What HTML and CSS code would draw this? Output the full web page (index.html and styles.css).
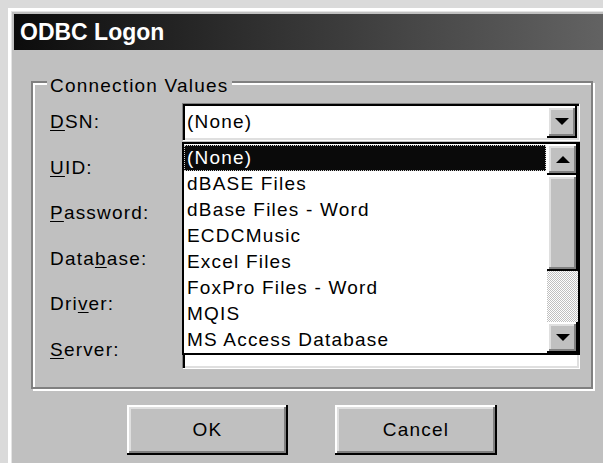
FILE: index.html
```html
<!DOCTYPE html>
<html lang="en">
<head>
<meta charset="utf-8">
<title>ODBC Logon</title>
<link rel="stylesheet" href="styles.css">
</head>
<body>
<div class="window">
  <div class="titlebar">ODBC Logon</div>
  <div class="client">
    <fieldset class="group">
      <legend>Connection Values</legend>
      <div class="form">
        <label class="lbl"><u>D</u>SN:</label>
        <div class="combo">
          <div class="sunken combo-field">
            <span class="combo-text">(None)</span>
            <span class="raised combo-btn">
              <svg width="14" height="8" viewBox="0 0 14 8"><polygon points="0,0 14,0 7,7"/></svg>
            </span>
          </div>
          <div class="droplist">
            <ul class="items">
              <li class="sel">(None)</li>
              <li>dBASE Files</li>
              <li>dBase Files - Word</li>
              <li>ECDCMusic</li>
              <li>Excel Files</li>
              <li>FoxPro Files - Word</li>
              <li>MQIS</li>
              <li>MS Access Database</li>
            </ul>
            <div class="vscroll">
              <span class="raised sb-btn">
                <svg width="14" height="8" viewBox="0 0 14 8"><polygon points="7,0 14,7 0,7"/></svg>
              </span>
              <span class="sb-track">
                <span class="raised sb-thumb"></span>
              </span>
              <span class="raised sb-btn">
                <svg width="14" height="8" viewBox="0 0 14 8"><polygon points="0,0 14,0 7,7"/></svg>
              </span>
            </div>
          </div>
        </div>
        <label class="lbl"><u>U</u>ID:</label>
        <div class="sunken edit"></div>
        <label class="lbl"><u>P</u>assword:</label>
        <div class="sunken edit"></div>
        <label class="lbl">Data<u>b</u>ase:</label>
        <div class="sunken edit"></div>
        <label class="lbl">Dri<u>v</u>er:</label>
        <div class="sunken edit"></div>
        <label class="lbl"><u>S</u>erver:</label>
        <div class="sunken edit"></div>
      </div>
    </fieldset>
    <div class="buttons">
      <button class="raised push" type="button">OK</button>
      <button class="raised push cancel" type="button">Cancel</button>
    </div>
  </div>
</div>
</body>
</html>
```

FILE: styles.css
```css
html, body {
  margin: 0;
  overflow: hidden;
}

body {
  width: 603px;
  height: 463px;
  background: #dadada;
  font-family: "Liberation Sans", Arial, sans-serif;
  font-size: 19px;
  letter-spacing: 1.2px;
  color: #000;
}

/* dialog frame */
.window {
  margin: 8px 0 0 8px;
  width: 640px;
  height: 520px;
  background: #c0c0c0;
  border-top: 3px solid #fff;
  border-left: 3px solid #fff;
  padding: 3px 0 0 3px;
  box-shadow: inset 1px 1px 0 #e4e4e4;
}

.titlebar {
  height: 36px;
  line-height: 36px;
  padding-left: 6px;
  background: linear-gradient(to right, #0c0c0c, #6a6a6a);
  color: #fff;
  font-weight: bold;
  font-size: 23px;
  letter-spacing: 0;
}

.client {
  padding: 17px 0 0 17px;
}

/* etched group box */
.group {
  box-sizing: border-box;
  width: 562px;
  margin: 0;
  padding: 6px 11px 18px 17px;
  border: 2px solid #808080;
  box-shadow: inset 2px 2px 0 #fff, 2px 2px 0 #fff;
  min-inline-size: 0;
}

.group legend {
  margin-left: -3px;
  padding: 8px 3px 0;
  line-height: 22px;
  background: #c0c0c0;
}

.form {
  display: grid;
  grid-template-columns: 132px 398px;
  grid-auto-rows: 38px;
  row-gap: 7.6px;
  align-items: center;
}

.lbl u {
  text-underline-offset: 2px;
}

/* 3D edges */
.sunken {
  box-sizing: border-box;
  height: 38px;
  background: #fff;
  border: 1px solid;
  border-color: #808080 #fff #fff #808080;
  box-shadow: inset 2px 2px 0 #000, inset -2px -2px 0 #dfdfdf;
}

.raised {
  box-sizing: border-box;
  background: #c0c0c0;
  box-shadow: inset -2px -2px 0 #000, inset 2px 2px 0 #fff, inset -4px -4px 0 #808080, inset 4px 4px 0 #dfdfdf;
}

/* combo box */
.combo {
  position: relative;
  height: 38px;
}

.combo-field {
  display: flex;
  align-items: center;
  padding: 2px;
}

.combo-text {
  padding-left: 2px;
}

.combo-btn {
  margin-left: auto;
  width: 30px;
  height: 32px;
  display: flex;
  align-items: center;
  justify-content: center;
}

.combo-btn svg,
.sb-btn svg {
  display: block;
  fill: #000;
}

/* open drop-down list */
.droplist {
  position: absolute;
  left: 0;
  top: calc(100% + 1px);
  box-sizing: border-box;
  width: 100%;
  height: 213px;
  border: 2px solid #000;
  background: #fff;
  display: flex;
  z-index: 2;
}

.items {
  flex: 1;
  list-style: none;
  margin: 0;
  padding: 1px 1px 0 0;
}

.items li {
  box-sizing: border-box;
  height: 26px;
  line-height: 24px;
  padding-left: 2px;
  border: 1px solid transparent;
  white-space: nowrap;
}

.items li.sel {
  background: #0a0a0a;
  color: #fff;
  border: 1px dotted #cfcfcf;
}

.vscroll {
  width: 31px;
  display: flex;
  flex-direction: column;
}

.sb-btn {
  height: 31px;
  flex: none;
  display: flex;
  align-items: center;
  justify-content: center;
}

.sb-track {
  flex: 1;
  display: flex;
  flex-direction: column;
  background: repeating-conic-gradient(#fff 0 25%, #c0c0c0 0 50%) 0 0 / 2px 2px;
}

.sb-thumb {
  height: 96px;
}

/* push buttons */
.buttons {
  display: flex;
  gap: 47px;
  margin-top: 16px;
  padding-left: 96px;
}

.push {
  width: 161px;
  height: 50px;
  border: 0;
  padding: 0;
  font: inherit;
  letter-spacing: inherit;
  color: #000;
}

.push.cancel {
  width: 162px;
}
```
